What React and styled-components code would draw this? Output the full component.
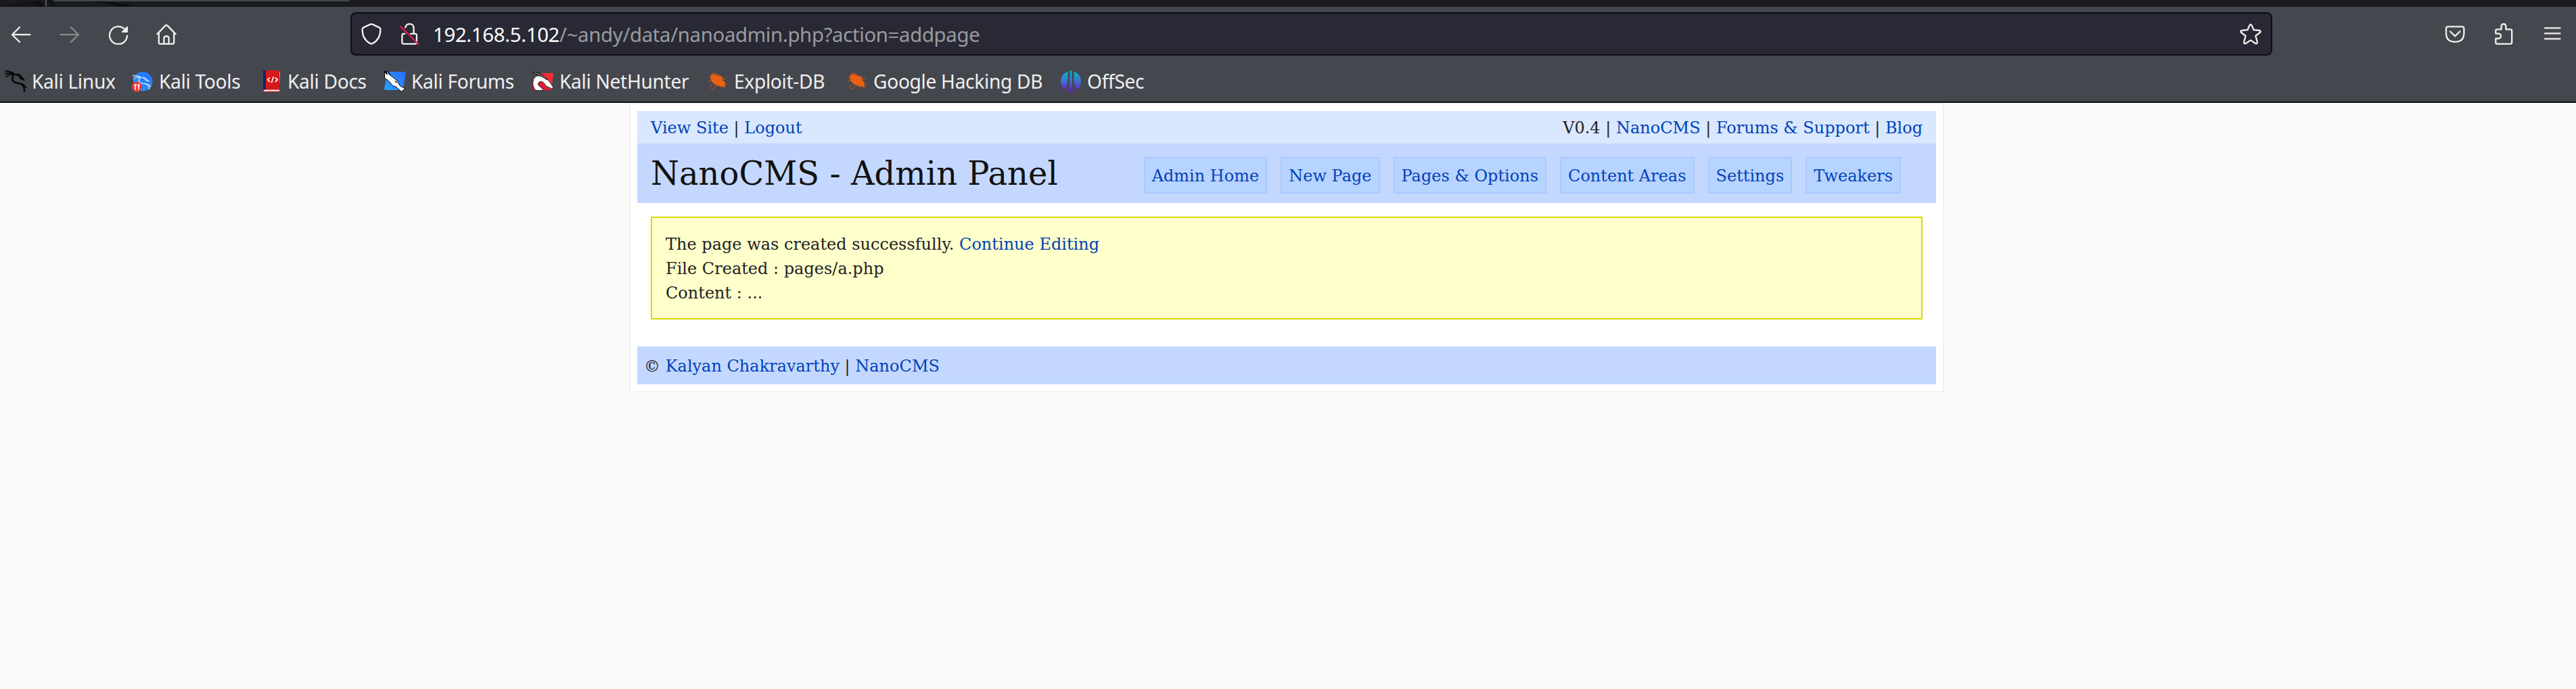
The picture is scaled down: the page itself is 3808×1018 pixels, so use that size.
import React from "react";
import styled, { createGlobalStyle } from "styled-components";

const GlobalStyle = createGlobalStyle`
  html, body { margin: 0; padding: 0; background: #f9f9f9; }
  body { width: 3808px; height: 1018px; overflow: hidden; }
  * { box-sizing: border-box; }
`;

const Page = styled.div`
  display: flex;
  flex-direction: column;
  width: 3808px;
  height: 1018px;
  background: #f9f9f9;
  font-family: "DejaVu Serif", serif;
  font-size: 24px;
  color: #222;
`;

/* ---------- browser chrome ---------- */

const Chrome = styled.header`
  display: flex;
  flex-direction: column;
  height: 152px;
  background: #45474e;
  border-bottom: 2px solid #0c0c10;
  font-family: "Noto Sans", sans-serif;
  color: #efefef;
`;

const TabStrip = styled.div`
  display: flex;
  height: 10px;
  background: #1a1b20;
  border-bottom: 1px solid #121317;
`;

const NavBar = styled.div`
  display: flex;
  align-items: center;
  height: 80px;
  padding: 0 19px 0 15px;
`;

const NavButtons = styled.div`
  display: flex;
  width: 503px;
`;

const NavButton = styled.span`
  display: flex;
  width: ${(p) => p.$w || 72}px;
  opacity: ${(p) => (p.$dim ? 0.4 : 1)};
`;

const UrlBar = styled.div`
  display: flex;
  align-items: center;
  width: 2841px;
  height: 64px;
  padding: 0 14px 0 13px;
  background: #282934;
  border: 2px solid #0d0d11;
  border-radius: 8px;
`;

const UrlIcon = styled.span`
  display: flex;
  width: ${(p) => p.$w}px;
`;

const Url = styled.span`
  flex: 1;
  padding-top: 2px;
  font-size: 29.4px;
  line-height: 60px;
  letter-spacing: -0.36px;
  color: #9a9a9f;
  white-space: pre;
`;

const Host = styled.span`
  color: #fbfbfe;
`;

const Tools = styled.div`
  display: flex;
  justify-content: space-between;
  width: 176px;
  margin-left: auto;
`;

const Bookmarks = styled.nav`
  display: flex;
  align-items: center;
  height: 60px;
  padding-left: 7px;
`;

const Bookmark = styled.a`
  display: flex;
  align-items: center;
  gap: 8px;
  width: ${(p) => p.$w}px;
  font-size: 28.2px;
  line-height: 60px;
  letter-spacing: -0.34px;
  white-space: nowrap;
`;

const Glyph = styled.svg.attrs({ viewBox: "0 0 32 32", width: 32, height: 32 })`
  display: block;
  flex: none;
  fill: none;
  stroke: #f0f0ec;
  stroke-width: 2.3;
  stroke-linecap: round;
  stroke-linejoin: round;
`;

const Picture = styled.svg.attrs({ viewBox: "0 0 32 32", width: 32, height: 32 })`
  display: block;
  flex: none;
`;

/* ---------- page ---------- */

const Container = styled.main`
  display: flex;
  flex-direction: column;
  width: 1944px;
  height: 428px;
  margin-left: 930px;
  padding: 10px;
  background: #fff;
  border: 2px solid #f1f1f1;
`;

const Link = styled.a`
  color: #0042b8;
  text-decoration: none;
`;

const TopBar = styled.div`
  display: flex;
  justify-content: space-between;
  height: 48px;
  padding: 0 20px;
  line-height: 50px;
  background: #d9e7ff;
`;

const TitleBar = styled.div`
  display: flex;
  justify-content: space-between;
  height: 88px;
  padding: 0 52px 0 20px;
  background: #c4d8ff;
`;

const Title = styled.h1`
  margin: 0;
  font-size: 48px;
  font-weight: normal;
  line-height: 88px;
  color: #111;
`;

const Menu = styled.nav`
  display: flex;
  gap: 20px;
  padding-top: 20px;
`;

const MenuItem = styled(Link)`
  height: 54px;
  padding: 0 10px;
  line-height: 52px;
  background: #b7d3ff;
  border: 2px solid #a9c8ff;
`;

const Notice = styled.section`
  height: 152px;
  margin: 20px 20px 40px;
  padding: 21px 20px;
  line-height: 36px;
  background: #ffffcc;
  border: 2px solid #d7d700;
`;

const Footer = styled.footer`
  height: 56px;
  padding: 0 10px;
  line-height: 58px;
  background: #c4d8ff;
`;

/* ---------- drawings ---------- */

const StripArt = () => (
  <svg width="520" height="9" viewBox="0 0 520 9">
    <path d="M0 9 L22 4 L50 2 L64 9Z" fill="#141519" />
    <path d="M48 3 L58 1 L66 9 L60 9Z M70 0 L74 0 L82 9 L76 9Z" fill="#0d0e11" />
    <path d="M130 2 Q170 2 200 9 L172 9 Q160 4 130 2Z" fill="#0d0e11" />
    <rect x="67" y="0" width="2" height="9" fill="#55565c" />
    <path d="M79 0H518Q517 2 514 2H84Q80 2 79 0Z" fill="#45474e" />
  </svg>
);

const Dragon = ({ color, weight = 1 }) => (
  <g fill="none" stroke={color} strokeLinecap="round" strokeLinejoin="round">
    <path
      d="M.8 1 Q8 1 13 4.5 M.8 4.8 Q7 3 13 5.5 M2 9.4 Q7 5.5 13 6"
      strokeWidth={1.8 * weight}
    />
    <path d="M11 3.5 L17 6.5 Q24 7.5 28.5 14 M19 5 L24 8.5" strokeWidth={1.8 * weight} />
    <path
      d="M14 6 Q8.5 12 13.5 16.8 Q16 18.5 22 19.4 Q29.5 21 29 31"
      strokeWidth={2.4 * weight}
    />
    <path d="M19 19 Q28 18.5 32 26" strokeWidth={1.6 * weight} />
    <path d="M21 10 L28.5 14 L24 13" strokeWidth={1.6 * weight} />
  </g>
);

const KaliLinuxIcon = () => (
  <Picture>
    <Dragon color="#050505" />
  </Picture>
);

const KaliToolsIcon = () => (
  <Picture>
    <defs>
      <linearGradient id="tools" x1="1" y1="0" x2="0" y2="1">
        <stop offset="0" stopColor="#2a6df8" />
        <stop offset="1" stopColor="#1f9bff" />
      </linearGradient>
    </defs>
    <circle cx="16.3" cy="16.2" r="14.2" fill="url(#tools)" />
    <g transform="translate(.6 6.6) scale(.86 .68)">
      <Dragon color="#cfe4ff" weight={0.75} />
    </g>
    <circle cx="7.5" cy="24.3" r="7.5" fill="#f23a3c" />
    <path
      d="M3.5 20.5h3.2v2.3h-.8v6h-1.6v-6h-.8z M8.4 20.5h3.2v2.3h-.8v6H9.2v-6h-.8z"
      fill="#fff"
    />
  </Picture>
);

const KaliDocsIcon = () => (
  <Picture>
    <rect x="26" y="2" width="3" height="6" fill="#f59a1c" />
    <rect x="26" y="8" width="3" height="7" fill="#2ea84f" />
    <rect x="26" y="15" width="3" height="4" fill="#3178e6" />
    <rect x="4" y="0" width="24" height="32" fill="#d51919" />
    <rect x="4" y="0" width="4" height="29" fill="#12265c" />
    <rect x="5" y="28.7" width="23" height="2" fill="#fff" />
    <path
      d="M14 10.5l-3.4 3.3 3.4 3.3 M21.8 10.5l3.4 3.3-3.4 3.3 M19.4 9.3l-3 9"
      fill="none"
      stroke="#fff"
      strokeWidth="1.7"
    />
  </Picture>
);

const KaliForumsIcon = () => (
  <Picture>
    <defs>
      <linearGradient id="forums" x1="1" y1="0" x2="0" y2="1">
        <stop offset="0" stopColor="#2a6bff" />
        <stop offset="1" stopColor="#24a6ff" />
      </linearGradient>
    </defs>
    <path d="M5 2H30Q32 2 31.8 4L28 27Q27.5 29 25 29H2Q0 29 0 27Z" fill="url(#forums)" />
    <path
      d="M.5 11V1L3 5.5L4.5.8L8 6.5L19 15L23 22.5L31 27L25.5 31.3L17 24L12 22.5L7.5 16.5Z"
      fill="#fff"
      stroke="#000"
      strokeWidth="1"
    />
    <path d="M5 1.5L9 7M1 1l4 5" stroke="#000" strokeWidth="1.3" />
    <path d="M15.5 14.5l3.8 3.2-2.4.6z" fill="#000" />
  </Picture>
);

const KaliNetHunterIcon = () => (
  <Picture>
    <defs>
      <linearGradient id="hunter" x1="1" y1="0" x2="0" y2="1">
        <stop offset="0" stopColor="#ff3434" />
        <stop offset="1" stopColor="#b8123f" />
      </linearGradient>
    </defs>
    <path d="M14 4H29Q31.5 4 31 6.5L28 27Q27.5 29.5 25 29.5H1Q0 29.5 0 27V16Z" fill="url(#hunter)" />
    <path
      d="M1 16Q1.5 10 8 8L14 8.5L24 15L30.8 25L29 27L20 23Q18 18 14 16.5Q8 16 8.5 21.5L17 29.5H5Q0 24 1 16Z"
      fill="#fff"
      stroke="#000"
      strokeWidth="1"
      strokeDasharray="2 1"
    />
    <path d="M.5 3L9 6.5L21 13M3 2.5Q13 4 22 14" fill="none" stroke="#000" strokeWidth="1.2" />
    <path d="M3 3.2Q12 6 19 11.5" fill="none" stroke="#ddd" strokeWidth=".8" />
  </Picture>
);

const BugIcon = () => (
  <Picture>
    <path
      d="M7 9L4 11 1 10M6 14L1 18M9 20L3 25M15 22L9 27 5 26M8 8L8 3M14 6L11 3M20 9L18 6M24 13L29 12M25 17L30 22M20 23L22 28M26 21L27 26"
      fill="none"
      stroke="#b55524"
      strokeWidth="1.3"
      opacity=".7"
    />
    <path
      d="M5 9L9 6L16 7.5L22 10L23 14L27 18L26 22L27.5 25L23 24L17 23L11 20L6.5 16Z"
      fill="#ec6012"
    />
    <path d="M4 8L11 4.5L16 7M18 8l5 2 1 4" fill="none" stroke="#c95a1c" strokeWidth="1.2" />
  </Picture>
);

const OffSecIcon = () => (
  <Picture>
    <defs>
      <linearGradient id="offsec" x1="0" y1="0" x2="0" y2="32" gradientUnits="userSpaceOnUse">
        <stop offset="0" stopColor="#00bcc8" />
        <stop offset=".45" stopColor="#3a78cf" />
        <stop offset="1" stopColor="#6a12d8" />
      </linearGradient>
    </defs>
    <g fill="url(#offsec)">
      <path d="M11.6 1.6Q1 6 1 16Q1 23.5 6.4 28.8Q11.6 21 11.6 12Z" />
      <path d="M20.4 1.6Q31 6 31 16Q31 23.5 25.6 28.8Q20.4 21 20.4 12Z" />
      <path d="M14.6.3H17.4Q17.2 18 19 32H13Q14.8 18 14.6.3Z" />
    </g>
  </Picture>
);

const BOOKMARKS = [
  { label: "Kali Linux", width: 188, Icon: KaliLinuxIcon },
  { label: "Kali Tools", width: 190, Icon: KaliToolsIcon },
  { label: "Kali Docs", width: 183, Icon: KaliDocsIcon },
  { label: "Kali Forums", width: 219, Icon: KaliForumsIcon },
  { label: "Kali NetHunter", width: 258, Icon: KaliNetHunterIcon },
  { label: "Exploit-DB", width: 206, Icon: BugIcon },
  { label: "Google Hacking DB", width: 316, Icon: BugIcon },
  { label: "OffSec", width: 130, Icon: OffSecIcon },
];

const MENU = ["Admin Home", "New Page", "Pages & Options", "Content Areas", "Settings", "Tweakers"];

export default function App() {
  return (
    <>
      <GlobalStyle />
      <Page>
        <Chrome>
          <TabStrip>
            <StripArt />
          </TabStrip>
          <NavBar>
            <NavButtons>
              <NavButton>
                <Glyph>
                  <path d="M29.5 17.2H3M14 6.3L3 17.2L14 28" />
                </Glyph>
              </NavButton>
              <NavButton $dim>
                <Glyph>
                  <path d="M2.5 17.2H29M18 6.3L29 17.2L18 28" />
                </Glyph>
              </NavButton>
              <NavButton $w={71}>
                <Glyph>
                  <path d="M24.3 8.2A13 13 0 1 0 29 18.8" />
                  <path d="M29.2 5.6V13.2H21.6Z" fill="#f0f0ec" stroke="#f0f0ec" strokeWidth="1.4" />
                </Glyph>
              </NavButton>
              <NavButton>
                <Glyph>
                  <path d="M2.4 16.2L14.4 3.9Q16 2.5 17.6 3.9L29.6 16.2" />
                  <path d="M4.8 14V28.4Q4.8 30.8 7.2 30.8H24.8Q27.2 30.8 27.2 28.4V14" />
                  <path d="M12.4 30.6V23Q12.4 19.5 16 19.5T19.6 23V30.6" />
                </Glyph>
              </NavButton>
            </NavButtons>
            <UrlBar>
              <UrlIcon $w={56}>
                <Glyph>
                  <path d="M14.6 1.9L4.4 6.6Q2.6 7.5 2.6 9.4C2.6 19.5 7 26.4 14.4 30.3Q16 31.2 17.6 30.3C25 26.4 29.4 19.5 29.4 9.4Q29.4 7.5 27.6 6.6L17.4 1.9Q16 1.2 14.6 1.9Z" />
                </Glyph>
              </UrlIcon>
              <UrlIcon $w={51}>
                <Glyph>
                  <path d="M10.2 6.5Q11.8 1.4 16.4 1.4Q22.6 1.4 22.6 8V15.8" />
                  <path d="M9.5 15.8H7.8Q5.4 15.8 5.4 18.2V28.4Q5.4 30.8 7.8 30.8H24.8Q27 30.8 27 28.4V18.2Q27 15.8 24.6 15.8H18" />
                  <path d="M3.2 5.2L29.4 31" stroke="#e6184a" />
                </Glyph>
              </UrlIcon>
              <Url>
                <Host>192.168.5.102</Host>/~andy/data/nanoadmin.php?action=addpage
              </Url>
              <Glyph>
                <path d="M14.5 3.3Q16 .9 17.5 3.3L20.6 10.2L28.8 11Q31.9 11.6 29.9 14L23.4 19L25.9 28.2Q26 31 23.2 30.2L16 25.4L8.8 30.2Q6 31 6.1 28.2L8.6 19L2.1 14Q.1 11.6 3.2 11L11.4 10.2Z" />
              </Glyph>
            </UrlBar>
            <Tools>
              <Glyph>
                <path d="M5.8 5.3H26.6Q29.4 5.3 29.4 8V15Q29.4 27.8 16.2 27.8T3 15V8Q3 5.3 5.8 5.3Z" />
                <path d="M9 12.5L16.2 19.3L23.4 12.5" />
              </Glyph>
              <Glyph>
                <path d="M4.3 15.6V11.8Q4.3 9.4 6.7 9.4H12.6V5Q12.6 1.3 16 1.3T19.4 5V9.4H25.8Q28.2 9.4 28.2 11.8V28.4Q28.2 30.8 25.8 30.8H6.7Q4.3 30.8 4.3 28.4V23H7.6Q12 23 12 19.3T7.6 15.6Z" />
              </Glyph>
              <Glyph>
                <path d="M5 7.4H27.5M5 15.4H27.5M5 23.4H27.5" />
              </Glyph>
            </Tools>
          </NavBar>
          <Bookmarks>
            {BOOKMARKS.map(({ label, width, Icon }) => (
              <Bookmark key={label} $w={width}>
                <Icon />
                {label}
              </Bookmark>
            ))}
          </Bookmarks>
        </Chrome>

        <Container>
          <TopBar>
            <div>
              <Link>View Site</Link> | <Link>Logout</Link>
            </div>
            <div>
              V0.4 | <Link>NanoCMS</Link> | <Link>Forums &amp; Support</Link> | <Link>Blog</Link>
            </div>
          </TopBar>
          <TitleBar>
            <Title>NanoCMS - Admin Panel</Title>
            <Menu>
              {MENU.map((label) => (
                <MenuItem key={label}>{label}</MenuItem>
              ))}
            </Menu>
          </TitleBar>
          <Notice>
            <div>
              The page was created successfully. <Link>Continue Editing</Link>
            </div>
            <div>File Created : pages/a.php</div>
            <div>Content : ...</div>
          </Notice>
          <Footer>
            © <Link>Kalyan Chakravarthy</Link> | <Link>NanoCMS</Link>
          </Footer>
        </Container>
      </Page>
    </>
  );
}
